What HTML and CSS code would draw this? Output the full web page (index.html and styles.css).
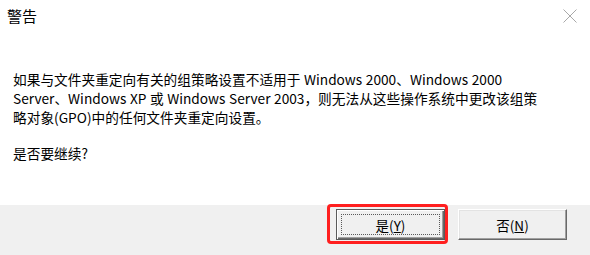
FILE: index.html
```html
<!DOCTYPE html>
<html>
<head>
<meta charset="utf-8">
<link rel="stylesheet" href="styles.css">
</head>
<body>
<div class="dialog">
  <div class="titlebar">
    <span class="title">警告</span>
    <svg class="close" width="14" height="14" viewBox="0 0 14 14">
      <path d="M0.5 0.5 L13.5 13.5 M13.5 0.5 L0.5 13.5" stroke="#a8a8a8" stroke-width="1" fill="none"/>
    </svg>
  </div>
  <div class="content">
    <p class="message">如果与文件夹重定向有关的组策略设置不适用于 Windows 2000、Windows 2000 Server、Windows XP 或 Windows Server 2003，则无法从这些操作系统中更改该组策略对象(GPO)中的任何文件夹重定向设置。</p>
    <p class="question">是否要继续?</p>
  </div>
  <div class="footer">
    <div class="btn-wrap">
      <button class="btn default"><span class="focus">是(<u>Y</u>)</span></button>
      <div class="highlight"></div>
    </div>
    <button class="btn">否(<u>N</u>)</button>
  </div>
</div>
</body>
</html>
```

FILE: styles.css
```css
body {
  margin: 0;
  background: #fff;
  font-family: "Noto Sans CJK SC", sans-serif;
  color: #000;
}
.dialog {
  width: 590px;
  height: 255px;
  display: flex;
  flex-direction: column;
}
.titlebar {
  height: 30px;
  display: flex;
  align-items: center;
  justify-content: space-between;
  padding: 0 13px 0 7px;
}
.title {
  font-size: 15px;
}
.close {
  margin-top: 2px;
}
.content {
  flex: 1;
  padding: 0 13px;
}
.message {
  margin: 40px 0 0;
  font-size: 13.7px;
  line-height: 19px;
  width: 532px;
  word-spacing: 0.5px;
}
.question {
  margin: 17px 0 0;
  font-size: 13.7px;
  line-height: 19px;
}
.footer {
  height: 50px;
  background: #f0f0f0;
  display: flex;
  justify-content: flex-end;
  align-items: flex-start;
  gap: 13px;
  padding: 4px 23px 0 0;
  box-sizing: border-box;
}
.btn-wrap {
  position: relative;
}
.btn {
  width: 109px;
  height: 31px;
  margin: 0;
  padding: 0;
  background: #f0f0f0;
  border-top: 1px solid #fff;
  border-left: 1px solid #fff;
  border-right: 1px solid #696969;
  border-bottom: 1px solid #696969;
  box-shadow: inset -1px -1px 0 #a0a0a0, inset 1px 1px 0 #e3e3e3;
  font-family: "Noto Sans CJK SC", sans-serif;
  font-size: 13.5px;
  color: #000;
  display: flex;
  align-items: center;
  justify-content: center;
}
.btn.default {
  border: 1px solid #5a5a5a;
  box-shadow: inset 1px 1px 0 #fff, inset -1px -1px 0 #696969, inset -2px -2px 0 #a0a0a0;
}
.focus {
  flex: 1;
  align-self: stretch;
  margin: 4px;
  border: 1px dotted #5a5a5a;
  display: flex;
  align-items: center;
  justify-content: center;
}
.highlight {
  position: absolute;
  left: -9px;
  right: -3px;
  top: -5px;
  bottom: -4px;
  border: 3px solid #ff1f1f;
  border-radius: 4px;
}
```
